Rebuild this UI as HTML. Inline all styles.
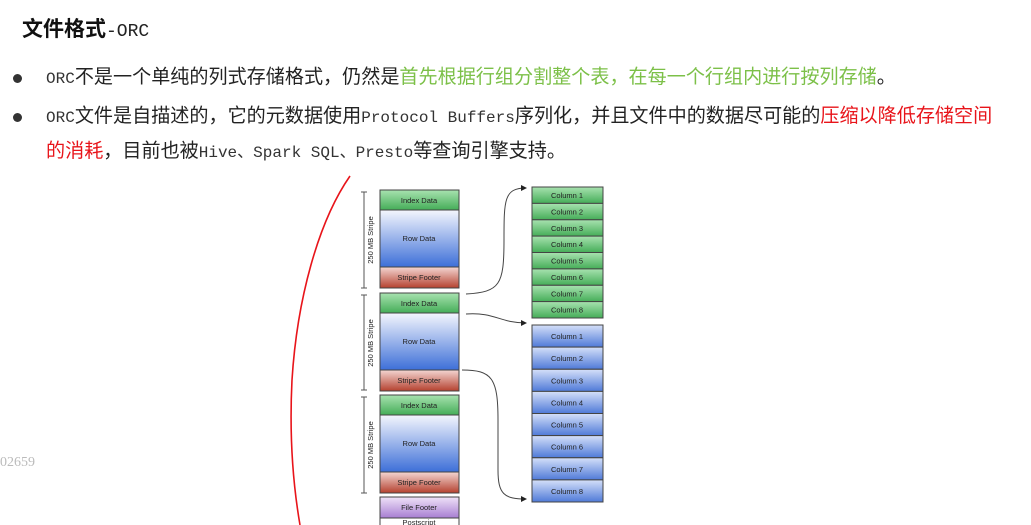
<!DOCTYPE html>
<html><head><meta charset="utf-8"><style>
html,body{margin:0;padding:0;background:#fff;width:1031px;height:525px;overflow:hidden;position:relative;font-family:"Liberation Sans","Noto Sans CJK SC",sans-serif;color:#222}
.t{position:absolute;white-space:nowrap;font-size:19.1px;line-height:22px;font-family:"Liberation Sans","Noto Sans CJK SC",sans-serif}
.m{font-family:"Liberation Mono","DejaVu Sans Mono",monospace;font-size:16px;color:#333}
.g{color:#7cc048}.r{color:#e8141a}
.dot{position:absolute;width:9px;height:9px;border-radius:50%;background:#333}
</style></head><body>
<div class="t" style="left:22px;top:19px;font-size:21px;font-weight:bold;color:#111">文件格式<span class="m" style="font-weight:normal;font-size:18px;color:#222">-ORC</span></div>
<div class="dot" style="left:13px;top:74px"></div>
<div class="dot" style="left:13px;top:113px"></div>
<div class="t" style="left:46px;top:67px"><span class="m">ORC</span>不是一个单纯的列式存储格式，仍然是<span class="g">首先根据行组分割整个表，在每一个行组内进行按列存储</span>。</div>
<div class="t" style="left:46px;top:106px"><span class="m">ORC</span>文件是自描述的，它的元数据使用<span class="m">Protocol Buffers</span>序列化，并且文件中的数据尽可能的<span class="r">压缩以降低存储空间</span></div>
<div class="t" style="left:46px;top:141px"><span class="r">的消耗</span>，目前也被<span class="m">Hive、Spark SQL、Presto</span>等查询引擎支持。</div>
<div class="t" style="left:0;top:452px;font-family:'Liberation Serif',serif;font-size:14px;color:#bbb">02659</div>
<svg width="1031" height="525" style="position:absolute;left:0;top:0" font-family="Liberation Sans,sans-serif">
<defs>
<linearGradient id="gi" x1="0" y1="0" x2="0" y2="1"><stop offset="0" stop-color="#a8e2b0"/><stop offset="1" stop-color="#45ad58"/></linearGradient>
<linearGradient id="br" x1="0" y1="0" x2="0" y2="1"><stop offset="0" stop-color="#f4f6fd"/><stop offset="1" stop-color="#3d6fd8"/></linearGradient>
<linearGradient id="rf" x1="0" y1="0" x2="0" y2="1"><stop offset="0" stop-color="#f3d6d2"/><stop offset="1" stop-color="#b5412f"/></linearGradient>
<linearGradient id="bc" x1="0" y1="0" x2="0" y2="1"><stop offset="0" stop-color="#d5e0f9"/><stop offset="1" stop-color="#4f7ad8"/></linearGradient>
<linearGradient id="pf" x1="0" y1="0" x2="0" y2="1"><stop offset="0" stop-color="#efe2f8"/><stop offset="1" stop-color="#a77ed2"/></linearGradient>
<marker id="ar" markerWidth="6" markerHeight="6" refX="5" refY="3" orient="auto"><path d="M0,0 L6,3 L0,6z" fill="#222"/></marker>
</defs>
<g stroke="#444" stroke-width="1" font-size="7.5" text-anchor="middle" fill="#222">
<g>
<rect x="380" y="190" width="79" height="20" fill="url(#gi)"/><rect x="380" y="210" width="79" height="57" fill="url(#br)"/><rect x="380" y="267" width="79" height="21" fill="url(#rf)"/>
<rect x="380" y="293" width="79" height="20" fill="url(#gi)"/><rect x="380" y="313" width="79" height="57" fill="url(#br)"/><rect x="380" y="370" width="79" height="21" fill="url(#rf)"/>
<rect x="380" y="395" width="79" height="20" fill="url(#gi)"/><rect x="380" y="415" width="79" height="57" fill="url(#br)"/><rect x="380" y="472" width="79" height="21" fill="url(#rf)"/>
<rect x="380" y="497" width="79" height="21" fill="url(#pf)"/><rect x="380" y="518" width="79" height="12" fill="#fff"/>
</g>
<g stroke="none">
<text x="419" y="203">Index Data</text><text x="419" y="241">Row Data</text><text x="419" y="280">Stripe Footer</text>
<text x="419" y="306">Index Data</text><text x="419" y="344">Row Data</text><text x="419" y="383">Stripe Footer</text>
<text x="419" y="408">Index Data</text><text x="419" y="446">Row Data</text><text x="419" y="485">Stripe Footer</text>
<text x="419" y="510">File Footer</text><text x="419" y="525">Postscript</text>
<text transform="translate(373,240) rotate(-90)">250 MB Stripe</text>
<text transform="translate(373,343) rotate(-90)">250 MB Stripe</text>
<text transform="translate(373,445) rotate(-90)">250 MB Stripe</text>
</g>
<path d="M364,192V288M361,192H367M361,288H367M364,295V390M361,295H367M361,390H367M364,397V493M361,397H367M361,493H367" stroke="#555"/>
<g>
<rect x="532" y="187" width="71" height="16.4" fill="url(#gi)"/><rect x="532" y="203.4" width="71" height="16.4" fill="url(#gi)"/><rect x="532" y="219.8" width="71" height="16.4" fill="url(#gi)"/><rect x="532" y="236.1" width="71" height="16.4" fill="url(#gi)"/><rect x="532" y="252.5" width="71" height="16.4" fill="url(#gi)"/><rect x="532" y="268.9" width="71" height="16.4" fill="url(#gi)"/><rect x="532" y="285.3" width="71" height="16.4" fill="url(#gi)"/><rect x="532" y="301.6" width="71" height="16.4" fill="url(#gi)"/>
</g>
<g stroke="none">
<text x="567" y="198">Column 1</text><text x="567" y="214.4">Column 2</text><text x="567" y="230.8">Column 3</text><text x="567" y="247.1">Column 4</text><text x="567" y="263.5">Column 5</text><text x="567" y="279.9">Column 6</text><text x="567" y="296.3">Column 7</text><text x="567" y="312.6">Column 8</text>
</g>
<g>
<rect x="532" y="325" width="71" height="22.1" fill="url(#bc)"/><rect x="532" y="347.1" width="71" height="22.1" fill="url(#bc)"/><rect x="532" y="369.3" width="71" height="22.1" fill="url(#bc)"/><rect x="532" y="391.4" width="71" height="22.1" fill="url(#bc)"/><rect x="532" y="413.5" width="71" height="22.1" fill="url(#bc)"/><rect x="532" y="435.6" width="71" height="22.1" fill="url(#bc)"/><rect x="532" y="457.8" width="71" height="22.1" fill="url(#bc)"/><rect x="532" y="479.9" width="71" height="22.1" fill="url(#bc)"/>
</g>
<g stroke="none">
<text x="567" y="339">Column 1</text><text x="567" y="361.1">Column 2</text><text x="567" y="383.3">Column 3</text><text x="567" y="405.4">Column 4</text><text x="567" y="427.5">Column 5</text><text x="567" y="449.6">Column 6</text><text x="567" y="471.8">Column 7</text><text x="567" y="493.9">Column 8</text>
</g>
<g fill="none" stroke="#444">
<path d="M466,294 C500,292 504,285 504,240 C504,200 504,188 526,188" marker-end="url(#ar)"/>
<path d="M466,314 C495,312 500,323 526,323" marker-end="url(#ar)"/>
<path d="M462,370 C492,370 498,378 498,420 L498,470 C498,494 504,499 526,499" marker-end="url(#ar)"/>
</g>
</g>
<path d="M350,176 C318,222 297,300 292,380 C289,440 294,490 300,525" fill="none" stroke="#e8141a" stroke-width="1.6"/>
</svg>
</body></html>
